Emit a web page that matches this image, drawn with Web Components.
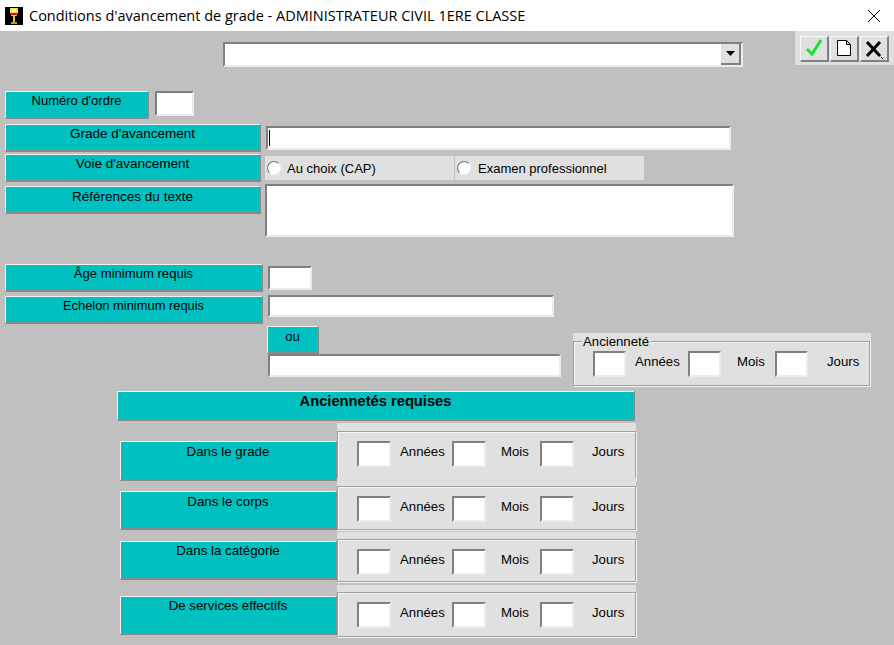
<!DOCTYPE html>
<html lang="fr">
<head>
<meta charset="utf-8">
<title>Conditions d'avancement de grade</title>
<style>
    html, body { margin: 0; height: 100%; overflow: hidden; background: #c0c0c0; }
    body { font-family: "Liberation Sans", Arial, sans-serif; }
    cond-window { height: 614px; }
</style>
</head>
<body>
<win-title-bar>Conditions d'avancement de grade - ADMINISTRATEUR CIVIL 1ERE CLASSE</win-title-bar>
<cond-window></cond-window>
<script>
class WinTitleBar extends HTMLElement {
    connectedCallback() {
        this.attachShadow({ mode: 'open' });
        this.shadowRoot.innerHTML = `
            <style>
                :host { display: flex; align-items: center; height: 31px; background: #fff; color: #000;
                    font: 14.5px "Open Sans", sans-serif; }
                .icon { width: 18px; height: 18px; margin: 0 6px 0 5px; flex: none; }
                .text { flex: 1; white-space: nowrap; }
                .close { width: 14px; height: 14px; margin-right: 13px; flex: none; }
            </style>
            <svg class="icon" viewBox="0 0 18 18">
                <rect width="18" height="18" fill="#000"/>
                <path d="M5 1H13V6L11.5 9H6.5L5 6Z" fill="#f4e04a"/>
                <rect x="7" y="2" width="4" height="3" fill="#fff6a8"/>
                <rect x="5" y="6" width="8" height="2" fill="#d8102c"/>
                <rect x="8" y="9" width="2" height="6" fill="#d8c040"/>
                <rect x="6" y="15" width="6" height="2" fill="#b8a030"/>
            </svg>
            <span class="text"><slot></slot></span>
            <svg class="close" viewBox="0 0 14 14"><path d="M1 1 13 13M13 1 1 13" stroke="#000" stroke-width="1" fill="none"/></svg>
        `;
    }
}

class WinLabel extends HTMLElement {
    connectedCallback() {
        this.attachShadow({ mode: 'open' });
        this.shadowRoot.innerHTML = `
            <style>
                :host { display: block; box-sizing: border-box; background: #00c0c0; color: #000;
                    border-style: solid; border-width: 1px 2px 2px 1px;
                    border-color: #f2f2f2 #8a8a8a #8a8a8a #f2f2f2;
                    text-align: center; font: 13.1px/16px "Liberation Sans", sans-serif; padding-top: 1px; white-space: nowrap; }
                :host([bold]) { font-weight: 700; font-size: 14.7px; }
            </style>
            <slot></slot>
        `;
    }
}

class WinField extends HTMLElement {
    connectedCallback() {
        this.attachShadow({ mode: 'open' });
        this.shadowRoot.innerHTML = `
            <style>
                :host { display: block; box-sizing: border-box; background: #fff; flex: none;
                    border-style: solid; border-width: 2px;
                    border-color: #808080 #ececec #ececec #808080; }
                .caret { display: none; width: 1px; height: 16px; margin: 2px 0 0 1px; background: #000; }
                :host([caret]) .caret { display: block; }
            </style>
            <div class="caret"></div>
        `;
    }
}

class WinCombo extends HTMLElement {
    connectedCallback() {
        this.attachShadow({ mode: 'open' });
        this.shadowRoot.innerHTML = `
            <style>
                :host { display: flex; justify-content: flex-end; box-sizing: border-box; background: #fff;
                    border-style: solid; border-width: 2px;
                    border-color: #808080 #ececec #ececec #808080; }
                .arrow { width: 20px; display: flex; align-items: center; justify-content: center; background: #e0e0e0;
                    border-right: 2px solid #808080; border-bottom: 2px solid #808080; box-sizing: border-box; }
            </style>
            <div class="arrow"><svg width="9" height="5" viewBox="0 0 9 5"><path d="M0 0H9L4.5 5Z" fill="#000"/></svg></div>
        `;
    }
}

class WinToolButton extends HTMLElement {
    connectedCallback() {
        this.attachShadow({ mode: 'open' });
        const icons = {
            ok: '<path d="M6 12 11 17 20 3" stroke="#16e32a" stroke-width="3" fill="none"/>',
            doc: '<path d="M6.5 3.5H15.5L19.5 7.5V18.5H6.5ZM15.5 3.5V7.5H19.5" stroke="#000" stroke-width="1" fill="#fff"/>',
            cancel: '<path d="M6 5 19 19" stroke="#000" stroke-width="3" fill="none"/><path d="M19 5 6 19" stroke="#000" stroke-width="3" fill="none"/><path d="M20 20 22 22" stroke="#000" stroke-width="1" fill="none"/>'
        };
        this.shadowRoot.innerHTML = `
            <style>
                :host { display: block; box-sizing: border-box; width: 29px; height: 26px; background: #e0e0e0;
                    border-style: solid; border-width: 1px 2px 2px 1px;
                    border-color: #f8f8f8 #808080 #808080 #f8f8f8; }
                svg { display: block; width: 26px; height: 23px; }
            </style>
            <svg viewBox="0 0 26 23">${icons[this.getAttribute('icon')] || ''}</svg>
        `;
    }
}

class WinRadio extends HTMLElement {
    connectedCallback() {
        this.attachShadow({ mode: 'open' });
        this.shadowRoot.innerHTML = `
            <style>
                :host { display: flex; align-items: center; box-sizing: border-box; background: #e0e0e0; height: 24px;
                    font: 13px "Liberation Sans", sans-serif; color: #000; padding-left: 2px; white-space: nowrap; }
                .dot { width: 12px; height: 12px; border-radius: 50%; background: #fff; margin-right: var(--radio-gap, 6px);
                    border: 1px solid; border-color: #707070 #f4f4f4 #f4f4f4 #707070; flex: none; }
            </style>
            <span class="dot"></span><slot></slot>
        `;
    }
}

// Champs Années / Mois / Jours dans un cadre, avec légende ou non
class DureeFields extends HTMLElement {
    connectedCallback() {
        this.attachShadow({ mode: 'open' });
        this.shadowRoot.innerHTML = `
            <style>
                :host { display: flex; flex-direction: column; box-sizing: border-box; background: #e0e0e0;
                    padding: 8px 1px 1px 0; font: 13.2px/22px "Liberation Sans", sans-serif; color: #000; position: relative; }
                .frame { flex: 1; box-sizing: border-box; border: 1px solid #a0a0a0;
                    box-shadow: inset 1px 1px 0 #f4f4f4, 1px 1px 0 #f4f4f4; }
                .legend { position: absolute; left: 9px; top: 1px; background: #e0e0e0; padding: 0 1px; line-height: 16px; }
                .legend:empty { display: none; }
                .row { display: grid; grid-template-columns: var(--cols, 34px 61px 34px 54px 34px 1fr); align-items: start;
                    padding: 9px 0 0 19px; }
                win-field { height: 26px; }
                span { padding-left: 9px; white-space: nowrap; }
                .mois { padding-left: var(--mois-pad, 15px); }
                .jours { padding-left: var(--jours-pad, 18px); }
            </style>
            <div class="legend">${this.getAttribute('legend') || ''}</div>
            <div class="frame">
                <div class="row">
                    <win-field></win-field><span>Années</span>
                    <win-field></win-field><span class="mois">Mois</span>
                    <win-field></win-field><span class="jours">Jours</span>
                </div>
            </div>
        `;
    }
}

class CondWindow extends HTMLElement {
    connectedCallback() {
        this.attachShadow({ mode: 'open' });
        this.shadowRoot.innerHTML = `
            <style>
                :host { display: block; background: #c0c0c0; overflow: hidden; }
                .top { display: flex; align-items: flex-start; height: 60px; }
                win-combo { width: 520px; height: 25px; margin: 11px 0 0 223px; }
                .tools { display: flex; gap: 1px; margin-left: 52px; width: 99px; height: 34px; box-sizing: border-box;
                    padding: 5px 0 0 5px; background: #e0e0e0; }
                .row { display: flex; align-items: flex-start; padding-left: 5px; }
                .r-ordre { height: 33px; }
                .r-ordre win-label { width: 144px; height: 28px; font-size: 13px; }
                .r-ordre win-field { width: 39px; height: 25px; margin-left: 6px; }
                .r-grade { height: 30px; }
                .r-voie { height: 32px; }
                .r-ref { height: 78px; }
                .r-grade win-label, .r-voie win-label, .r-ref win-label { width: 256px; height: 28px; font-size: 13.5px; }
                .r-ref win-label { padding-top: 2px; }
                .r-grade win-field { width: 465px; height: 24px; margin: 2px 0 0 5px; }
                .radios { display: flex; gap: 1px; margin: 2px 0 0 4px; }
                .radios win-radio { width: 189px; }
                .radios win-radio:last-child { --radio-gap: 7px; }
                .r-ref win-field { width: 469px; height: 53px; margin: -2px 0 0 4px; }
                .r-age { height: 32px; }
                .r-ech { height: 30px; }
                .r-age win-label, .r-ech win-label { width: 258px; height: 28px; }
                .r-ech win-label { font-size: 12.9px; }
                .r-age win-field { width: 44px; height: 24px; margin: 2px 0 0 5px; }
                .r-ech win-field { width: 286px; height: 22px; margin: -1px 0 0 5px; }
                .r-ou { display: flex; align-items: flex-start; padding-left: 267px; height: 65px; }
                .ou-col { width: 306px; flex: none; }
                .ou-col win-label { width: 52px; height: 28px; padding-top: 2px; }
                .ou-col win-field { width: 293px; height: 23px; margin-left: 1px; }
                .anc { width: 298px; height: 54px; margin-top: 7px;
                    --cols: 33px 62px 33px 54px 33px 1fr; --mois-pad: 16px; --jours-pad: 19px; }
                .titre { width: 518px; height: 30px; margin-left: 117px; }
                .durees { display: grid; grid-template-columns: 217px 299px; margin-left: 120px; align-items: start; }
                .durees duree-fields { height: 100%; padding-right: 0; }
                .durees win-label { font-size: 13.3px; }
                .d1 { height: 54px; margin-top: 2px; }
                .d2 { height: 53px; margin-top: 1px; }
                .d3 { height: 51px; margin-top: 1px; }
                .d4 { height: 53px; margin-top: 2px; }
                .d3 duree-fields, .d4 duree-fields { padding-top: 7px; }
                .d1 win-label { height: 40px; margin-top: 18px; padding-top: 2px; }
                .d2 win-label { height: 39px; margin-top: 13px; padding-top: 2px; }
                .d3 win-label { height: 39px; margin-top: 9px; }
                .d4 win-label { height: 39px; margin-top: 11px; }
            </style>
            <div class="top">
                <win-combo></win-combo>
                <div class="tools">
                    <win-tool-button icon="ok"></win-tool-button>
                    <win-tool-button icon="doc"></win-tool-button>
                    <win-tool-button icon="cancel"></win-tool-button>
                </div>
            </div>
            <div class="row r-ordre"><win-label>Numéro d'ordre</win-label><win-field></win-field></div>
            <div class="row r-grade"><win-label>Grade d'avancement</win-label><win-field caret></win-field></div>
            <div class="row r-voie"><win-label>Voie d'avancement</win-label>
                <div class="radios"><win-radio>Au choix (CAP)</win-radio><win-radio>Examen professionnel</win-radio></div></div>
            <div class="row r-ref"><win-label>Références du texte</win-label><win-field></win-field></div>
            <div class="row r-age"><win-label>Âge minimum requis</win-label><win-field></win-field></div>
            <div class="row r-ech"><win-label>Echelon minimum requis</win-label><win-field></win-field></div>
            <div class="r-ou">
                <div class="ou-col"><win-label>ou</win-label><win-field></win-field></div>
                <duree-fields class="anc" legend="Ancienneté"></duree-fields>
            </div>
            <win-label class="titre" bold>Anciennetés requises</win-label>
            <div class="durees d1"><win-label>Dans le grade</win-label><duree-fields></duree-fields></div>
            <div class="durees d2"><win-label>Dans le corps</win-label><duree-fields></duree-fields></div>
            <div class="durees d3"><win-label>Dans la catégorie</win-label><duree-fields></duree-fields></div>
            <div class="durees d4"><win-label>De services effectifs</win-label><duree-fields></duree-fields></div>
        `;
    }
}

customElements.define('win-title-bar', WinTitleBar);
customElements.define('win-label', WinLabel);
customElements.define('win-field', WinField);
customElements.define('win-combo', WinCombo);
customElements.define('win-tool-button', WinToolButton);
customElements.define('win-radio', WinRadio);
customElements.define('duree-fields', DureeFields);
customElements.define('cond-window', CondWindow);
</script>
</body>
</html>
